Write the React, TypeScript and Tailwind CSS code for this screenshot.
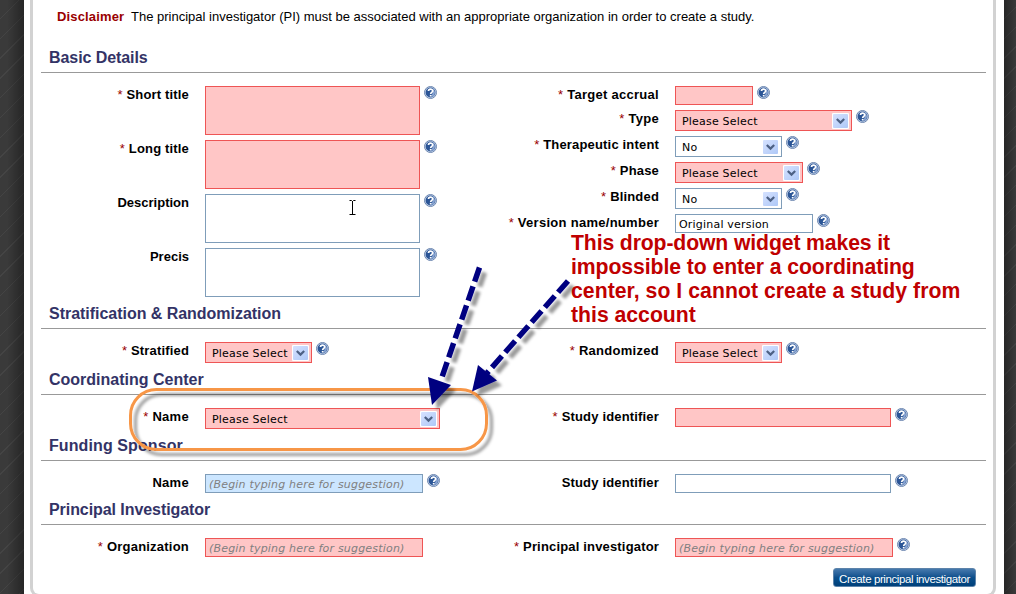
import type { ReactNode } from "react";

function HelpIcon() {
  return (
    <svg className="ml-1 size-[13px] shrink-0" viewBox="0 0 13 13">
      <circle cx="6.5" cy="6.5" r="6" fill="#cfdcf0" stroke="#6c86ae" strokeWidth="1" />
      <circle cx="6.5" cy="6.5" r="4.9" fill="#2b5596" />
      <path d="M8.500 2.2a4.9 4.9 0 0 1 .6 8.200L7.500 11L8.800 6z" fill="#86a2d0" />
      <path d="M4.500 4.900C4.500 2.600 8.700 2.500 8.700 4.900C8.700 6.400 6.700 6.300 6.700 8" fill="none" stroke="#fff" strokeWidth="1.700" />
      <rect x="5.800" y="8.900" width="1.800" height="1.600" fill="#fff" />
    </svg>
  );
}

function Row({
  label,
  required,
  tracking = "tracking-[0.17px]",
  height = "h-[26px]",
  help = true,
  children,
}: {
  label: string;
  required?: boolean;
  tracking?: string;
  height?: string;
  help?: boolean;
  children: ReactNode;
}) {
  return (
    <div className={`flex items-start ${height}`}>
      <div className="mr-4 flex w-[148px] shrink-0 justify-end whitespace-nowrap text-[13px] leading-[18px] font-bold text-black">
        {required && <span className="mr-[4px] font-normal text-[#900]">*</span>}
        <span className={tracking}>{label}</span>
      </div>
      {children}
      {help && <HelpIcon />}
    </div>
  );
}

const RED = "border-[#ee5555] bg-[#ffc6c6]";
const PLAIN = "border-[#7f9db9] bg-white";

function Area({ tone }: { tone: string }) {
  return <div className={`h-[49px] w-[215px] shrink-0 border ${tone}`} />;
}

function Input({ tone, width, children }: { tone: string; width: string; children?: ReactNode }) {
  return (
    <div className={`flex h-[19px] shrink-0 border pl-[3px] font-['DejaVu_Sans',sans-serif] text-[11px] leading-[19px] whitespace-nowrap text-black ${tone} ${width}`}>
      {children}
    </div>
  );
}

function Suggest({ tone }: { tone: string }) {
  return (
    <Input tone={tone} width="w-[218px]">
      <span className="tracking-[0.19px] text-[#808080] italic">(Begin typing here for suggestion)</span>
    </Input>
  );
}

function Select({ tone, width, value }: { tone: string; width: string; value: string }) {
  return (
    <div className={`flex h-[21px] shrink-0 items-start justify-between border pt-[2px] pr-[2px] pl-[6px] font-['DejaVu_Sans',sans-serif] text-[11px] leading-[17px] whitespace-nowrap text-black ${tone} ${width}`}>
      <span className="tracking-[0.2px]">{value}</span>
      <svg className="h-[16px] w-[17px]" viewBox="0 0 17 16">
        <defs>
          <linearGradient id="arrowFill" x1="0" y1="0" x2="1" y2="1">
            <stop offset="0" stopColor="#d6e2ff" />
            <stop offset="1" stopColor="#aec8f7" />
          </linearGradient>
        </defs>
        <rect width="17" height="16" rx="1" fill="#fff" />
        <rect x="1" y="1" width="15" height="14" rx="1" fill="url(#arrowFill)" />
        <path d="M4.8 6L8.5 9.6L12.2 6" fill="none" stroke="#4d6185" strokeWidth="2.2" />
      </svg>
    </div>
  );
}

function Section({ title, tracking, height, children }: { title: string; tracking?: string; height: string; children: ReactNode }) {
  return (
    <section className={height}>
      <h2 className={`h-6 border-b border-[#999] pl-2 text-[16px] leading-[18px] font-bold whitespace-nowrap text-[#333366] ${tracking ?? ""}`}>
        {title}
      </h2>
      <div className="grid grid-cols-[470px_475px] pt-[13px]">{children}</div>
    </section>
  );
}

function Annotations() {
  return (
    <>
      <svg className="pointer-events-none absolute inset-0 h-[594px] w-[1016px]" viewBox="0 0 1016 594">
        <defs>
          <filter id="shade" x="-20%" y="-20%" width="150%" height="150%">
            <feDropShadow dx="5" dy="5" stdDeviation="1.8" floodColor="#000" floodOpacity="0.4" />
          </filter>
        </defs>
        <rect x="130.5" y="389.5" width="356" height="60" rx="26" fill="none" stroke="#f79646" strokeWidth="3" filter="url(#shade)" />
        <g fill="#000080" filter="url(#shade)">
          <path d="M479.5 267.5L442 377" fill="none" stroke="#000080" strokeWidth="5.5" strokeDasharray="15 5" />
          <path d="M428 377L451 385L432 405Z" />
        </g>
        <g fill="#000080" filter="url(#shade)">
          <path d="M568 281L487 373" fill="none" stroke="#000080" strokeWidth="5.5" strokeDasharray="15 5" />
          <path d="M478 365L497 380.5L472 391.5Z" />
        </g>
        <path d="M349.5 200.5H351.5L352.5 201.5L353.5 200.5H355.5M352.5 201V214M349.5 214.5H355.5" fill="none" stroke="#000" strokeWidth="1" />
      </svg>
      <div className="absolute top-[231px] left-[571px] text-[21.2px] leading-[24px] font-bold whitespace-nowrap text-[#c00000]">
        <div className="tracking-[-0.12px]">This drop-down widget makes it</div>
        <div className="tracking-[-0.07px]">impossible to enter a coordinating</div>
        <div className="tracking-[0.05px]">center, so I cannot create a study from</div>
        <div>this account</div>
      </div>
    </>
  );
}

const STRIPES =
  "bg-[repeating-linear-gradient(135deg,#3a3a3a_0px,#3a3a3a_13px,#444_13px,#444_14px)]";

export default function App() {
  return (
    <div className="relative flex h-[594px] w-[1016px] overflow-hidden bg-[#3a3a3a] font-['Liberation_Sans',sans-serif]">
      <div className={`w-6 shrink-0 ${STRIPES}`}>
        <div className="h-full bg-linear-to-r from-transparent from-30% to-black/35" />
      </div>
      <main className="h-full w-[980px] shrink-0 bg-white pl-[6px]">
        <div className="h-[597px] w-[966px] rounded-b-[9px] border-x-[3px] border-b-[3px] border-[#d2d2d2] pl-2">
          <p className="flex h-[49px] pt-[8px] pl-4 text-[13px] leading-[18px] whitespace-nowrap text-black">
            <b className="w-[74px] tracking-[0.15px] text-[#900]">Disclaimer</b>
            <span>
              The principal investigator (PI) must be associated with an appropriate organization in order to create a study.
            </span>
          </p>
          <div className="w-[945px]">
            <Section title="Basic Details" tracking="tracking-[-0.07px]" height="h-[256px]">
              <div>
                <Row label="Short title" required height="h-[54px]"><Area tone={RED} /></Row>
                <Row label="Long title" required height="h-[54px]"><Area tone={RED} /></Row>
                <Row label="Description" tracking="tracking-normal" height="h-[54px]"><Area tone={PLAIN} /></Row>
                <Row label="Precis" tracking="tracking-normal" height="h-[54px]"><Area tone={PLAIN} /></Row>
              </div>
              <div>
                <Row label="Target accrual" required tracking="tracking-[0.28px]" height="h-[24px]"><Input tone={RED} width="w-[78px]" /></Row>
                <Row label="Type" required tracking="tracking-[0.3px]"><Select tone={RED} width="w-[177px]" value="Please Select" /></Row>
                <Row label="Therapeutic intent" required><Select tone={PLAIN} width="w-[107px]" value="No" /></Row>
                <Row label="Phase" required><Select tone={RED} width="w-[128px]" value="Please Select" /></Row>
                <Row label="Blinded" required><Select tone={PLAIN} width="w-[107px]" value="No" /></Row>
                <Row label="Version name/number" required tracking="tracking-[0.28px]">
                  <Input tone={PLAIN} width="w-[138px]"><span className="tracking-[0.2px]">Original version</span></Input>
                </Row>
              </div>
            </Section>
            <Section title="Stratification & Randomization" tracking="tracking-[-0.03px]" height="h-[66px]">
              <Row label="Stratified" required><Select tone={RED} width="w-[107px]" value="Please Select" /></Row>
              <Row label="Randomized" required tracking="tracking-[0.28px]"><Select tone={RED} width="w-[107px]" value="Please Select" /></Row>
            </Section>
            <Section title="Coordinating Center" height="h-[66px]">
              <Row label="Name" required tracking="tracking-[0.3px]" help={false}><Select tone={RED} width="w-[235px]" value="Please Select" /></Row>
              <Row label="Study identifier" required><Input tone={RED} width="w-[216px]" /></Row>
            </Section>
            <Section title="Funding Sponsor" tracking="tracking-[0.1px]" height="h-[64px]">
              <Row label="Name" tracking="tracking-[0.3px]"><Suggest tone="border-[#7f9db9] bg-[#cce6ff]" /></Row>
              <Row label="Study identifier"><Input tone={PLAIN} width="w-[216px]" /></Row>
            </Section>
            <Section title="Principal Investigator" tracking="tracking-[-0.07px]" height="h-[67px]">
              <Row label="Organization" required tracking="tracking-[0.22px]" help={false}><Suggest tone={RED} /></Row>
              <Row label="Principal investigator" required><Suggest tone={RED} /></Row>
            </Section>
            <div className="flex justify-end pr-[10px]">
              <button className="h-[19px] w-[143px] rounded-[3px] border border-[#5d83aa] bg-linear-to-b from-[#4579ad] via-[#0b4f8c] to-[#00407a] text-[11.5px] leading-[20px] tracking-[-0.4px] whitespace-nowrap text-white">
                Create principal investigator
              </button>
            </div>
          </div>
        </div>
      </main>
      <div className={`w-3 shrink-0 ${STRIPES}`}>
        <div className="h-full bg-linear-to-l from-transparent to-black/35" />
      </div>
      <Annotations />
    </div>
  );
}
